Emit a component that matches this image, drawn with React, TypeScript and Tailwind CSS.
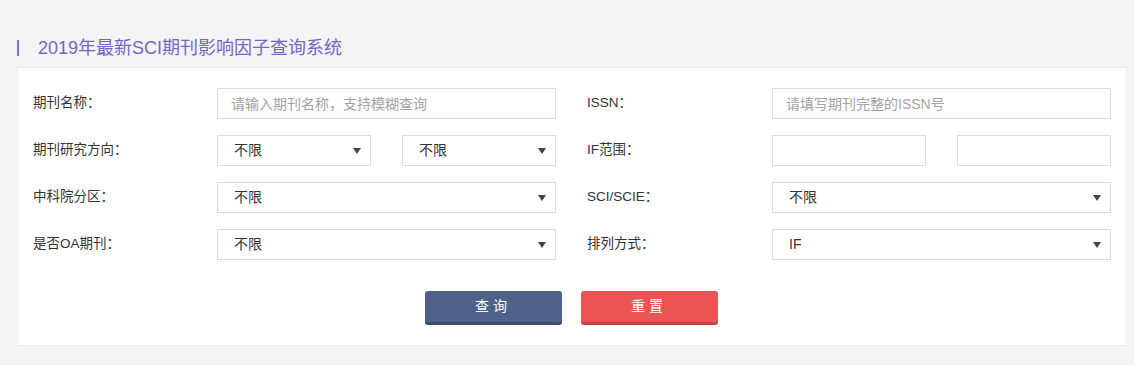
import React from "react";

const font = { fontFamily: '"Liberation Sans", "Noto Sans CJK SC", "Noto Sans", sans-serif' };

// Simple select with a small filled triangle on the right
const Select: React.FC<{ value: string; options?: string[] }> = ({ value, options }) => (
  <div className="relative h-[31px] w-full">
    <select
      defaultValue={value}
      className="h-full w-full appearance-none rounded-none border border-[#dcdcdc] bg-white pl-[16px] pr-6 text-[14px] text-[#333] outline-none"
    >
      {(options ?? [value]).map((o) => (
        <option key={o}>{o}</option>
      ))}
    </select>
    <span className="pointer-events-none absolute right-[10px] top-1/2 -translate-y-1/2 border-x-[4px] border-t-[6px] border-x-transparent border-t-[#444]" />
  </div>
);

const Input: React.FC<{ placeholder?: string }> = ({ placeholder }) => (
  <input
    placeholder={placeholder}
    className="h-[31px] w-full border border-[#dcdcdc] bg-white px-[13px] text-[14px] text-[#333] outline-none placeholder:text-[#a3a3a3]"
  />
);

const Label: React.FC<{ children: React.ReactNode }> = ({ children }) => (
  <div className="flex h-[31px] items-center text-[13.5px] text-[#333]">{children}</div>
);

export default function App() {
  return (
    <div className="min-h-[365px] w-full bg-[#f4f4f4] pt-[38px]" style={font}>
      <div className="ml-[17px] flex h-[20px] items-center">
        <span className="h-[16px] w-[2px] bg-[#7a6fd3]" />
        <h2 className="ml-[19px] text-[18px] leading-none text-[#7266c9]">2019年最新SCI期刊影响因子查询系统</h2>
      </div>

      <div className="mx-[17px] mt-[9px] w-[1110px] border border-[#ededed] bg-white px-[15px] pb-[20px] pt-[20px]">
        <div className="grid grid-cols-[184px_339px_31px_185px_339px] gap-y-[16px]">
          {/* row 1 */}
          <Label>期刊名称：</Label>
          <Input placeholder="请输入期刊名称，支持模糊查询" />
          <div />
          <Label>ISSN：</Label>
          <Input placeholder="请填写期刊完整的ISSN号" />

          {/* row 2 */}
          <Label>期刊研究方向：</Label>
          <div className="grid grid-cols-[154px_154px] justify-between">
            <Select value="不限" />
            <Select value="不限" />
          </div>
          <div />
          <Label>IF范围：</Label>
          <div className="grid grid-cols-[154px_154px] justify-between">
            <Input />
            <Input />
          </div>

          {/* row 3 */}
          <Label>中科院分区：</Label>
          <Select value="不限" />
          <div />
          <Label>SCI/SCIE：</Label>
          <Select value="不限" />

          {/* row 4 */}
          <Label>是否OA期刊：</Label>
          <Select value="不限" />
          <div />
          <Label>排列方式：</Label>
          <Select value="IF" />
        </div>

        <div className="mt-[31px] flex justify-center gap-[19px] pr-[2px]">
          <button className="h-[34px] w-[137px] rounded-[3px] border-b-[3px] border-[#3e4d6e] bg-[#4f6189] text-[14px] tracking-[4px] text-white">
            查询
          </button>
          <button className="h-[34px] w-[137px] rounded-[3px] border-b-[3px] border-[#c94545] bg-[#ea5455] text-[14px] tracking-[4px] text-white">
            重置
          </button>
        </div>
      </div>
    </div>
  );
}
